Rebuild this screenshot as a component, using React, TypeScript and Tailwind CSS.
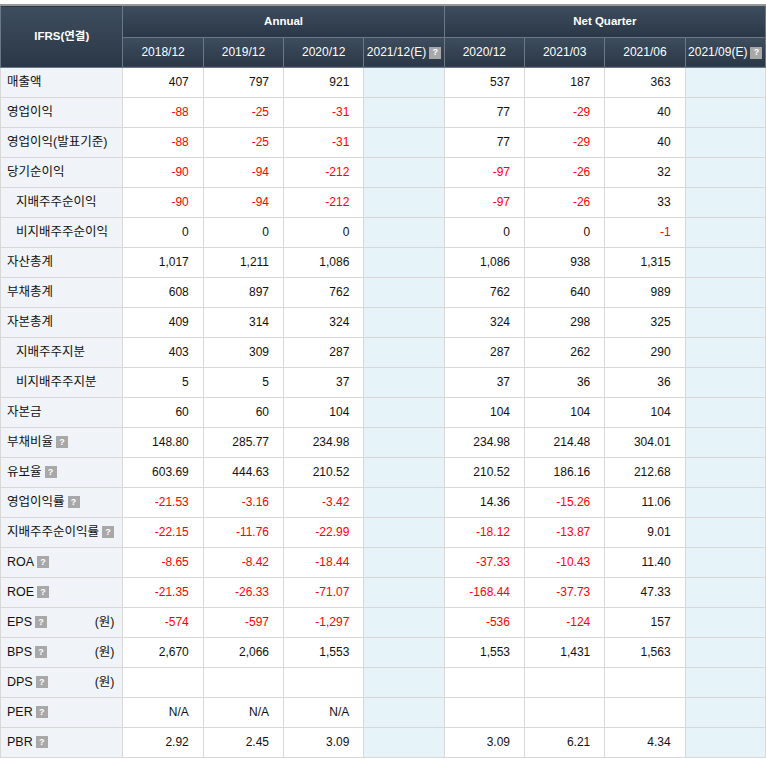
import React from 'react';

type Row = { label: string; indent?: boolean; help?: boolean; unit?: string; a: string[]; q: string[] };

const rows: Row[] = [
  { label: '매출액', a: ['407', '797', '921'], q: ['537', '187', '363'] },
  { label: '영업이익', a: ['-88', '-25', '-31'], q: ['77', '-29', '40'] },
  { label: '영업이익(발표기준)', a: ['-88', '-25', '-31'], q: ['77', '-29', '40'] },
  { label: '당기순이익', a: ['-90', '-94', '-212'], q: ['-97', '-26', '32'] },
  { label: '지배주주순이익', indent: true, a: ['-90', '-94', '-212'], q: ['-97', '-26', '33'] },
  { label: '비지배주주순이익', indent: true, a: ['0', '0', '0'], q: ['0', '0', '-1'] },
  { label: '자산총계', a: ['1,017', '1,211', '1,086'], q: ['1,086', '938', '1,315'] },
  { label: '부채총계', a: ['608', '897', '762'], q: ['762', '640', '989'] },
  { label: '자본총계', a: ['409', '314', '324'], q: ['324', '298', '325'] },
  { label: '지배주주지분', indent: true, a: ['403', '309', '287'], q: ['287', '262', '290'] },
  { label: '비지배주주지분', indent: true, a: ['5', '5', '37'], q: ['37', '36', '36'] },
  { label: '자본금', a: ['60', '60', '104'], q: ['104', '104', '104'] },
  { label: '부채비율', help: true, a: ['148.80', '285.77', '234.98'], q: ['234.98', '214.48', '304.01'] },
  { label: '유보율', help: true, a: ['603.69', '444.63', '210.52'], q: ['210.52', '186.16', '212.68'] },
  { label: '영업이익률', help: true, a: ['-21.53', '-3.16', '-3.42'], q: ['14.36', '-15.26', '11.06'] },
  { label: '지배주주순이익률', help: true, a: ['-22.15', '-11.76', '-22.99'], q: ['-18.12', '-13.87', '9.01'] },
  { label: 'ROA', help: true, a: ['-8.65', '-8.42', '-18.44'], q: ['-37.33', '-10.43', '11.40'] },
  { label: 'ROE', help: true, a: ['-21.35', '-26.33', '-71.07'], q: ['-168.44', '-37.73', '47.33'] },
  { label: 'EPS', help: true, unit: '(원)', a: ['-574', '-597', '-1,297'], q: ['-536', '-124', '157'] },
  { label: 'BPS', help: true, unit: '(원)', a: ['2,670', '2,066', '1,553'], q: ['1,553', '1,431', '1,563'] },
  { label: 'DPS', help: true, unit: '(원)', a: ['', '', ''], q: ['', '', ''] },
  { label: 'PER', help: true, a: ['N/A', 'N/A', 'N/A'], q: ['', '', ''] },
  { label: 'PBR', help: true, a: ['2.92', '2.45', '3.09'], q: ['3.09', '6.21', '4.34'] },
];

const Help = () => (
  <span className="ml-[3px] inline-flex h-[12px] w-[12px] items-center justify-center bg-[#a8a8a8] text-[9px] font-bold leading-none text-white align-middle">?</span>
);

const head = 'bg-gradient-to-b from-[#3e4e5e] to-[#2a3747] text-white font-bold text-[11.5px] border border-[#6b7886]';

function Cell({ v }: { v: string }) {
  return (
    <td className={`h-[30px] border border-[#d8d8d8] pr-[14px] text-right ${v.startsWith('-') ? 'text-[#ff0000]' : 'text-[#111]'}`}>{v}</td>
  );
}

export default function App() {
  return (
    <div className="w-[766px] bg-white pt-[4px]" style={{ fontFamily: '"Liberation Sans", "Noto Sans CJK KR", sans-serif' }}>
      <table className="w-[766px] table-fixed border-collapse text-[12px]">
        <colgroup>
          <col className="w-[122px]" />
          {Array.from({ length: 8 }).map((_, i) => (
            <col key={i} className="w-[80px]" />
          ))}
        </colgroup>
        <thead>
          <tr className="h-[32px] border-t-2 border-[#999]">
            <th rowSpan={2} className={head}>IFRS(연결)</th>
            <th colSpan={4} className={head}>Annual</th>
            <th colSpan={4} className={head}>Net Quarter</th>
          </tr>
          <tr className="h-[30px]">
            {['2018/12', '2019/12', '2020/12', '2021/12(E)', '2020/12', '2021/03', '2021/06', '2021/09(E)'].map((h, i) => (
              <th key={i} className={`${head} font-normal text-[12px] whitespace-nowrap`}>
                {h}
                {h.includes('(E)') && <Help />}
              </th>
            ))}
          </tr>
        </thead>
        <tbody>
          {rows.map((r) => (
            <tr key={r.label}>
              <td className="h-[30px] border border-[#d8d8d8] bg-[#f0f3f8] pl-[6px] pr-[8px] text-[12.5px] text-[#111]">
                <div className={`flex items-center ${r.indent ? 'pl-[9px]' : ''}`}>
                  <span>{r.label}</span>
                  {r.help && <Help />}
                  {r.unit && <span className="ml-auto">{r.unit}</span>}
                </div>
              </td>
              {r.a.map((v, i) => <Cell key={'a' + i} v={v} />)}
              <td className="border border-[#d8d8d8] bg-[#e6f4fa]" />
              {r.q.map((v, i) => <Cell key={'q' + i} v={v} />)}
              <td className="border border-[#d8d8d8] bg-[#e6f4fa]" />
            </tr>
          ))}
        </tbody>
      </table>
    </div>
  );
}
